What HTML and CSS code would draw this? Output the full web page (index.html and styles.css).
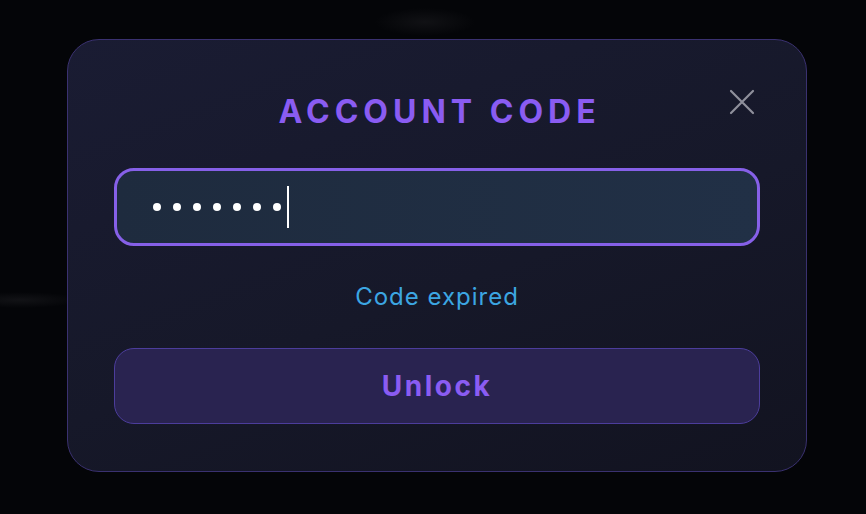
FILE: index.html
```html
<!DOCTYPE html>
<html lang="en">
<head>
    <meta charset="UTF-8">
    <meta name="viewport" content="width=device-width, initial-scale=1.0">
    <title>Account Code</title>
    <link rel="stylesheet" href="styles.css">
</head>
<body>
    <div class="modal">
        <button class="close" aria-label="Close">
            <svg width="26" height="26" viewBox="0 0 26 26" fill="none" stroke="currentColor" stroke-width="2.2" stroke-linecap="round">
                <path d="M2 2 L24 24 M24 2 L2 24"/>
            </svg>
        </button>
        <h1 class="title">ACCOUNT CODE</h1>
        <div class="code-field">
            <span class="dot"></span>
            <span class="dot"></span>
            <span class="dot"></span>
            <span class="dot"></span>
            <span class="dot"></span>
            <span class="dot"></span>
            <span class="dot"></span>
            <span class="caret"></span>
        </div>
        <p class="status">Code expired</p>
        <button class="unlock">Unlock</button>
    </div>
</body>
</html>
```

FILE: styles.css
```css
html, body {
    height: 100%;
}
body {
    margin: 0;
    padding: 39px 0 0 67px;
    box-sizing: border-box;
    font-family: Inter, "Noto Sans", sans-serif;
    background-color: #040508;
    background-image:
        radial-gradient(ellipse 50px 14px at 425px 22px, rgba(36, 36, 40, 0.4), transparent),
        radial-gradient(ellipse 60px 8px at 20px 300px, rgba(50, 50, 54, 0.3), transparent);
    overflow: hidden;
}
.modal {
    position: relative;
    width: 740px;
    box-sizing: border-box;
    padding: 52px 46px 47px;
    border: 1px solid #3a3170;
    border-radius: 32px;
    background: linear-gradient(160deg, #1a1c33 0%, #161829 55%, #121320 100%);
    display: flex;
    flex-direction: column;
}
.close {
    position: absolute;
    top: 49px;
    right: 51px;
    padding: 0;
    border: none;
    background: none;
    color: #8f909c;
    cursor: pointer;
    line-height: 0;
}
.title {
    margin: 0;
    text-align: center;
    font-size: 32px;
    line-height: 40px;
    font-weight: 700;
    letter-spacing: 5px;
    padding-left: 5px;
    color: #8a5cf2;
}
.code-field {
    margin-top: 36px;
    height: 78px;
    box-sizing: border-box;
    padding: 0 36px;
    border: 3px solid #8660e8;
    border-radius: 20px;
    background: linear-gradient(90deg, #1e2b3e, #213046);
    display: flex;
    align-items: center;
    gap: 12px;
}
.dot {
    width: 8px;
    height: 8px;
    border-radius: 50%;
    background: #ffffff;
}
.caret {
    width: 2px;
    height: 42px;
    margin-left: -6px;
    background: #ffffff;
}
.status {
    margin: 36px 0 0;
    text-align: center;
    font-size: 24px;
    line-height: 30px;
    letter-spacing: 1px;
    color: #3ca6e2;
}
.unlock {
    margin-top: 36px;
    height: 76px;
    border: 1px solid #4c3d9c;
    border-radius: 20px;
    background: #292350;
    color: #8a5cf2;
    font-family: inherit;
    font-size: 28px;
    font-weight: 700;
    letter-spacing: 2.5px;
    cursor: pointer;
}
```
